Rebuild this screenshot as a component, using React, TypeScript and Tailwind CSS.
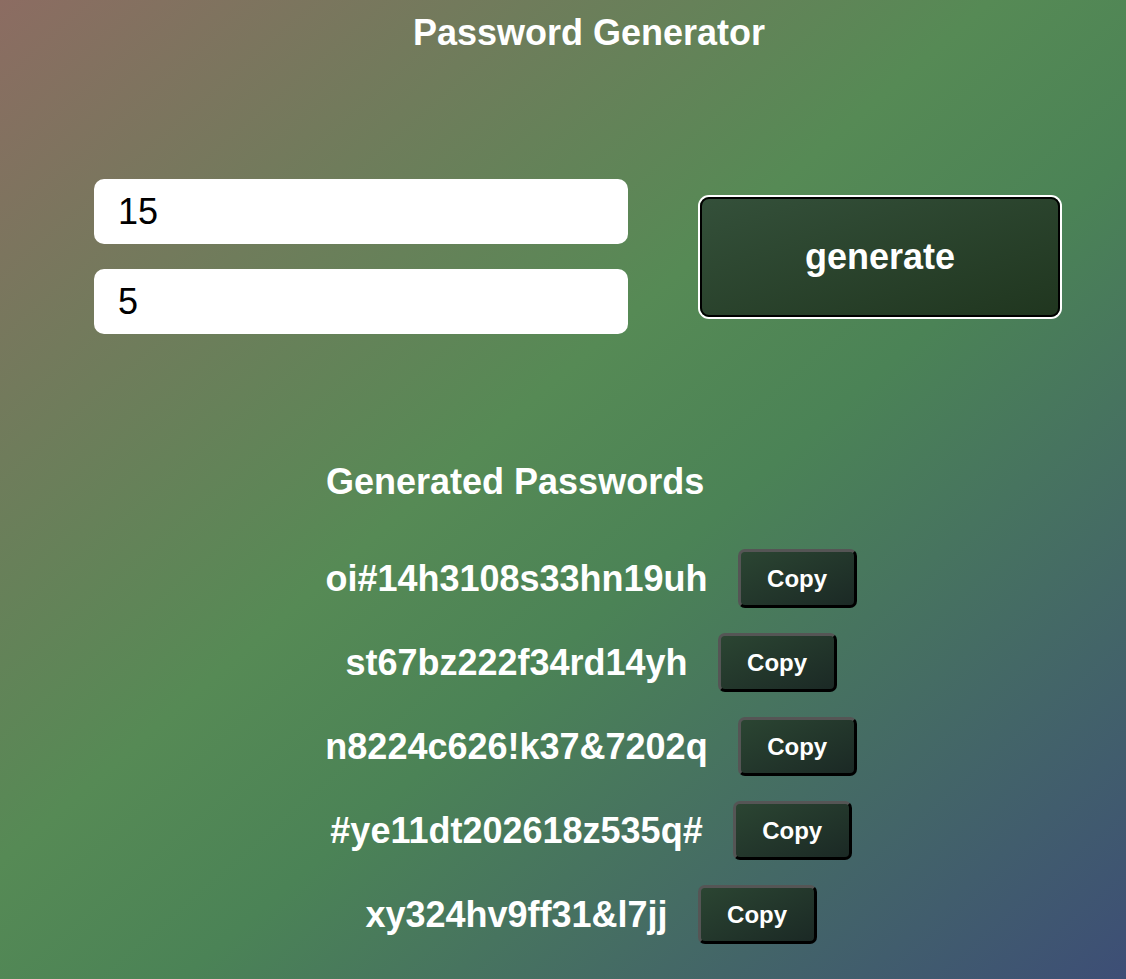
import React, { useState } from "react";

const PASSWORDS = [
  "oi#14h3108s33hn19uh",
  "st67bz222f34rd14yh",
  "n8224c626!k37&7202q",
  "#ye11dt202618z535q#",
  "xy324hv9ff31&l7jj",
];

export default function App() {
  const [length, setLength] = useState("15");
  const [count, setCount] = useState("5");

  return (
    <div className="min-h-screen w-full bg-[linear-gradient(to_bottom_right,#8c6c62_0%,#568a55_44%,#4b8356_58%,#3d4e76_100%)] font-['Liberation_Sans',Arial,sans-serif] text-white">
      <h1 className="pl-[52px] pt-[13px] text-center text-[36px] font-bold leading-[40px]">
        Password Generator
      </h1>

      {/* inputs + generate */}
      <div className="mt-[126px] flex items-center pl-[94px]">
        <div className="flex w-[534px] flex-col gap-[25px]">
          <input
            value={length}
            onChange={(e) => setLength(e.target.value)}
            className="h-[65px] w-full rounded-[10px] bg-white pl-[24px] text-[36px] text-black outline-none"
          />
          <input
            value={count}
            onChange={(e) => setCount(e.target.value)}
            className="h-[65px] w-full rounded-[10px] bg-white pl-[24px] text-[36px] text-black outline-none"
          />
        </div>
        <button className="ml-[72px] h-[120px] w-[360px] rounded-[9px] border-2 border-black bg-[linear-gradient(to_bottom_right,#34503a,#20361f)] text-[36px] font-bold text-white shadow-[0_0_0_2px_#ffffff]">
          generate
        </button>
      </div>

      {/* results */}
      <h2 className="mt-[128px] pl-[326px] text-[36px] font-bold leading-[40px]">
        Generated Passwords
      </h2>

      <div className="mt-[47px] flex flex-col items-center gap-[25px] pl-[56px]">
        {PASSWORDS.map((p) => (
          <div key={p} className="flex items-center gap-[30px]">
            <span className="text-[36px] font-bold leading-[40px]">{p}</span>
            <button className="h-[59px] w-[119px] rounded-[7px] border-[3px] border-t-[#555555] border-l-[#555555] border-r-black border-b-black bg-[linear-gradient(to_bottom_right,#2b4532,#1b2925)] text-[24px] font-bold text-white">
              Copy
            </button>
          </div>
        ))}
      </div>
    </div>
  );
}
